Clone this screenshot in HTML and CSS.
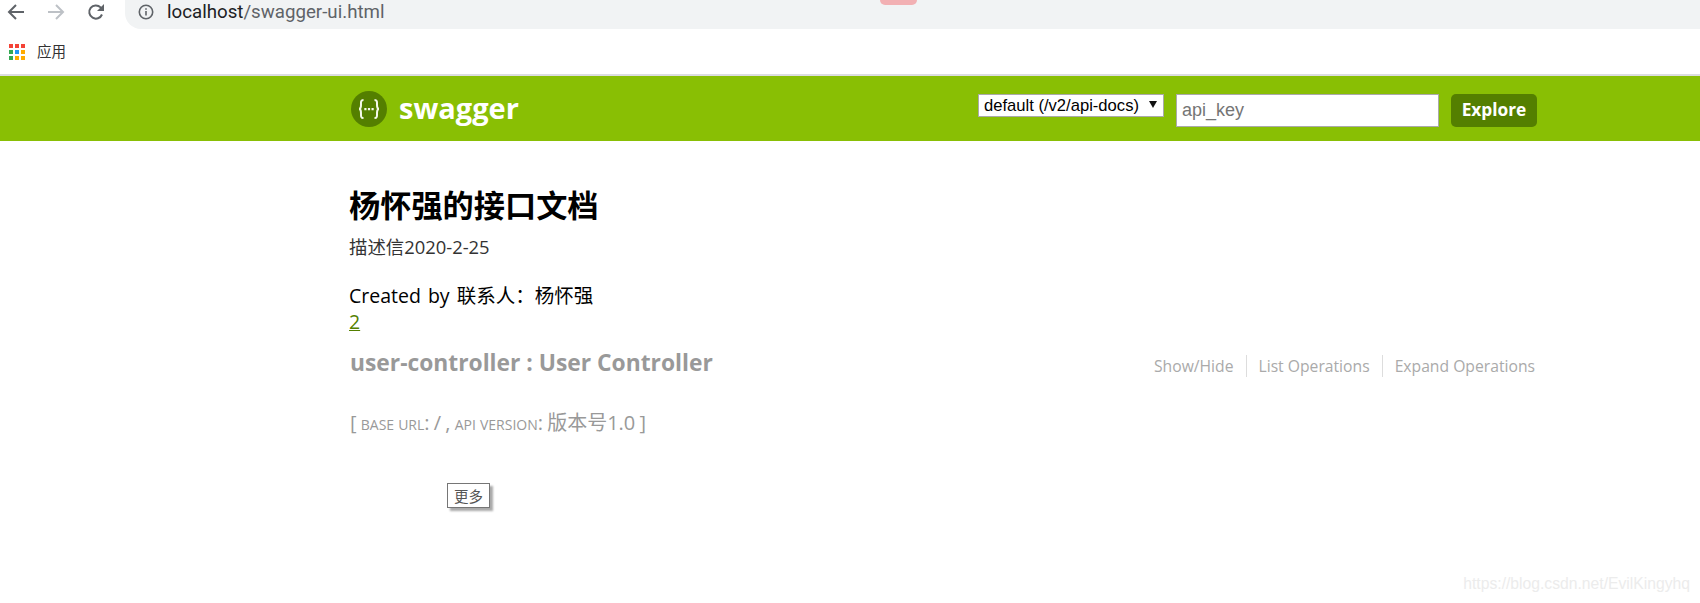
FILE: index.html
```html
<!DOCTYPE html>
<html lang="zh">
<head>
    <meta charset="UTF-8">
    <title>Swagger UI</title>
    <link rel="stylesheet" href="styles.css">
</head>
<body>
    <!-- browser toolbar -->
    <div class="toolbar">
        <svg class="nav-icon" viewBox="0 0 18 18"><path d="M17 9H2M9 2L2 9l7 7" fill="none" stroke="#5f6368" stroke-width="2"/></svg>
        <svg class="nav-icon" viewBox="0 0 18 18"><path d="M1 9h15M9 2l7 7-7 7" fill="none" stroke="#bdc1c6" stroke-width="2"/></svg>
        <svg class="nav-icon" viewBox="0 0 18 18"><path d="M15 11.5A6.6 6.6 0 1 1 13.6 4.4L15.5 6.5" fill="none" stroke="#5f6368" stroke-width="2"/><path d="M17 1v7h-7z" fill="#5f6368"/></svg>
        <div class="address-bar">
            <svg class="info-icon" viewBox="0 0 16 16"><circle cx="8" cy="8" r="6.7" fill="none" stroke="#5f6368" stroke-width="1.6"/><path d="M7.2 7h1.6v4.6H7.2zM7.2 4.2h1.6v1.6H7.2z" fill="#5f6368"/></svg>
            <span class="host">localhost</span><span class="url-path">/swagger-ui.html</span>
        </div>
    </div>
    <div class="notice-tab"></div>

    <!-- bookmarks -->
    <div class="bookmarks">
        <div class="apps-grid">
            <i class="red"></i><i class="red"></i><i class="red"></i>
            <i class="green"></i><i class="blue"></i><i class="orange"></i>
            <i class="green"></i><i class="orange"></i><i class="orange"></i>
        </div>
        <span class="apps-label">应用</span>
    </div>

    <!-- swagger header -->
    <div class="header">
        <div class="logo">
            <svg class="logo-mark" viewBox="0 0 36 36">
                <circle cx="18" cy="18" r="18" fill="#547f00"/>
                <path d="M12.500 9c-3 0-2.500 2.500-2.500 5 0 2.500-.6 4-2 4 1.400 0 2 1.500 2 4 0 2.500-.5 5 2.500 5M23.500 9c3 0 2.500 2.500 2.500 5 0 2.500.6 4 2 4-1.400 0-2 1.500-2 4 0 2.500.5 5-2.500 5" fill="none" stroke="#f4f8ea" stroke-width="2"/>
                <path d="M13.300 17h2.200v2.200h-2.200zM16.900 17h2.200v2.200h-2.200zM20.500 17h2.200v2.200h-2.200z" fill="#f4f8ea"/>
            </svg>
            <span class="logo-text">swagger</span>
        </div>
        <div class="explore-form">
            <div class="select-box">
                <select class="spec-select">
                    <option>default (/v2/api-docs)</option>
                </select>
            </div>
            <input class="api-key" type="text" placeholder="api_key">
            <a class="explore-btn">Explore</a>
        </div>
    </div>

    <!-- api info -->
    <div class="content">
        <h1 class="api-title">杨怀强的接口文档</h1>
        <div class="api-desc">描述信2020-2-25</div>
        <div class="contact">Created by 联系人：杨怀强</div>
        <a class="contact-link">2</a>

        <div class="resource">
            <h2 class="resource-name">user-controller : User Controller</h2>
            <ul class="resource-links">
                <li>Show/Hide</li>
                <li>List Operations</li>
                <li>Expand Operations</li>
            </ul>
        </div>

        <div class="base-info">[ <span class="small-caps">base url</span>: / , <span class="small-caps">api version</span>: 版本号1.0 ]</div>
    </div>

    <div class="tip">更多</div>
    <div class="watermark">https://blog.csdn.net/EvilKingyhq</div>
</body>
</html>
```

FILE: styles.css
```css
html, body {
    height: 100%;
}
body {
    margin: 0;
    position: relative;
    overflow: hidden;
    font-family: "Open Sans", "Noto Sans CJK SC", sans-serif;
    background-color: white;
}
.toolbar {
    height: 29px;
    display: flex;
    align-items: center;
    padding-left: 7px;
    gap: 22px;
}
.nav-icon {
    width: 18px;
    height: 18px;
    margin-top: -5px;
}
.address-bar {
    flex: 1;
    height: 29px;
    margin-left: -2px;
    display: flex;
    align-items: center;
    padding-left: 13px;
    background-color: #f1f3f4;
    border-radius: 0 0 0 16px;
    font-family: Roboto, "Liberation Sans", sans-serif;
    font-size: 18.700px;
}
.info-icon {
    width: 16px;
    height: 16px;
    margin-right: 13px;
    margin-top: -5px;
}
.host {
    color: #202124;
    margin-top: -6px;
}
.url-path {
    color: #5f6368;
    margin-top: -6px;
}
.notice-tab {
    position: absolute;
    left: 880px;
    top: 0;
    width: 37px;
    height: 5px;
    background-color: #f2b0b3;
    border-radius: 0 0 7px 7px;
}
.bookmarks {
    height: 45px;
    display: flex;
    align-items: center;
    padding-left: 9px;
    box-sizing: border-box;
}
.apps-grid {
    display: grid;
    grid-template-columns: repeat(3, 4px);
    grid-auto-rows: 4px;
    gap: 2px;
    margin-right: 12px;
}
.apps-grid .red { background-color: #f44336; }
.apps-grid .green { background-color: #34a853; }
.apps-grid .blue { background-color: #2196f3; }
.apps-grid .orange { background-color: #ffab00; }
.apps-label {
    font-family: "Noto Sans CJK SC", sans-serif;
    font-size: 14.500px;
    margin-top: -2px;
    color: #333;
}
.header {
    height: 65px;
    box-sizing: content-box;
    border-top: 2px solid #dcdde0;
    background-color: #89bf04;
    display: flex;
    align-items: center;
    justify-content: space-between;
    padding-left: 351px;
    padding-right: 163px;
}
.logo {
    display: flex;
    align-items: center;
    gap: 12px;
}
.logo-mark {
    width: 36px;
    height: 36px;
}
.logo-text {
    font-size: 29px;
    font-weight: bold;
    margin-top: -2px;
    color: white;
}
.explore-form {
    display: flex;
    align-items: flex-start;
    margin-top: 4px;
}
.select-box {
    position: relative;
    margin-right: 12px;
}
.select-box::after {
    content: "";
    position: absolute;
    right: 7px;
    top: 7px;
    border-left: 4px solid transparent;
    border-right: 4px solid transparent;
    border-top: 7px solid #111;
}
.spec-select {
    display: block;
    appearance: none;
    width: 186px;
    height: 23px;
    padding: 0 0 0 5px;
    margin: 0;
    border: 1px solid #aaa;
    border-radius: 0;
    background-color: white;
    font-family: "Liberation Sans", sans-serif;
    font-size: 16.600px;
    color: black;
}
.api-key {
    width: 263px;
    height: 33px;
    box-sizing: border-box;
    margin: 0 12px 0 0;
    padding: 0 5px;
    border: 1px solid #aaa;
    font-family: "Liberation Sans", sans-serif;
    font-size: 18px;
}
.explore-btn {
    width: 86px;
    height: 33px;
    line-height: 31px;
    text-align: center;
    background-color: #547f00;
    border-radius: 5px;
    color: white;
    font-size: 17.300px;
    font-weight: bold;
}
.content {
    width: 1187px;
    padding-left: 350px;
}
.api-title {
    margin: 40px 0 0 -1px;
    font-family: "Noto Sans CJK SC", sans-serif;
    font-size: 31.200px;
    line-height: 46px;
    font-weight: bold;
    color: black;
}
.api-desc {
    font-size: 18.400px;
    line-height: 26px;
    margin: 7px 0 0 -1px;
    color: #333;
}
.contact {
    font-size: 19.500px;
    line-height: 26px;
    word-spacing: 2px;
    margin: 23px 0 0 -1px;
    color: black;
}
.contact-link {
    display: block;
    font-size: 19.500px;
    line-height: 26px;
    margin-left: -1px;
    color: #547f00;
    text-decoration: underline;
}
.resource {
    display: flex;
    justify-content: space-between;
    align-items: flex-start;
    margin-top: 13px;
}
.resource-name {
    margin: 0;
    font-size: 22.800px;
    line-height: 30px;
    font-weight: bold;
    color: #999;
}
.resource-links {
    display: flex;
    margin: 7px 2px 0 0;
    padding: 0;
    list-style: none;
    font-size: 15.700px;
    line-height: 22px;
    color: #aaa;
}
.resource-links li {
    padding: 0 12px;
    border-right: 1px solid #ddd;
}
.resource-links li:last-child {
    padding-right: 0;
    border-right: none;
}
.base-info {
    margin-top: 32px;
    font-size: 20px;
    line-height: 26px;
    word-spacing: -1px;
    color: #999;
}
.small-caps {
    font-variant: small-caps;
    font-size: 19.500px;
}
.tip {
    position: absolute;
    left: 447px;
    top: 483px;
    width: 41px;
    height: 23px;
    border: 1px solid #767676;
    box-shadow: 3px 3px 2px #aaa;
    background-color: white;
    text-align: center;
    font-family: "Noto Sans CJK SC", sans-serif;
    font-size: 14.500px;
    line-height: 23px;
    color: #555;
}
.watermark {
    position: absolute;
    right: 10px;
    top: 575px;
    font-family: "Liberation Sans", sans-serif;
    font-size: 15.700px;
    color: #ececec;
}
```
